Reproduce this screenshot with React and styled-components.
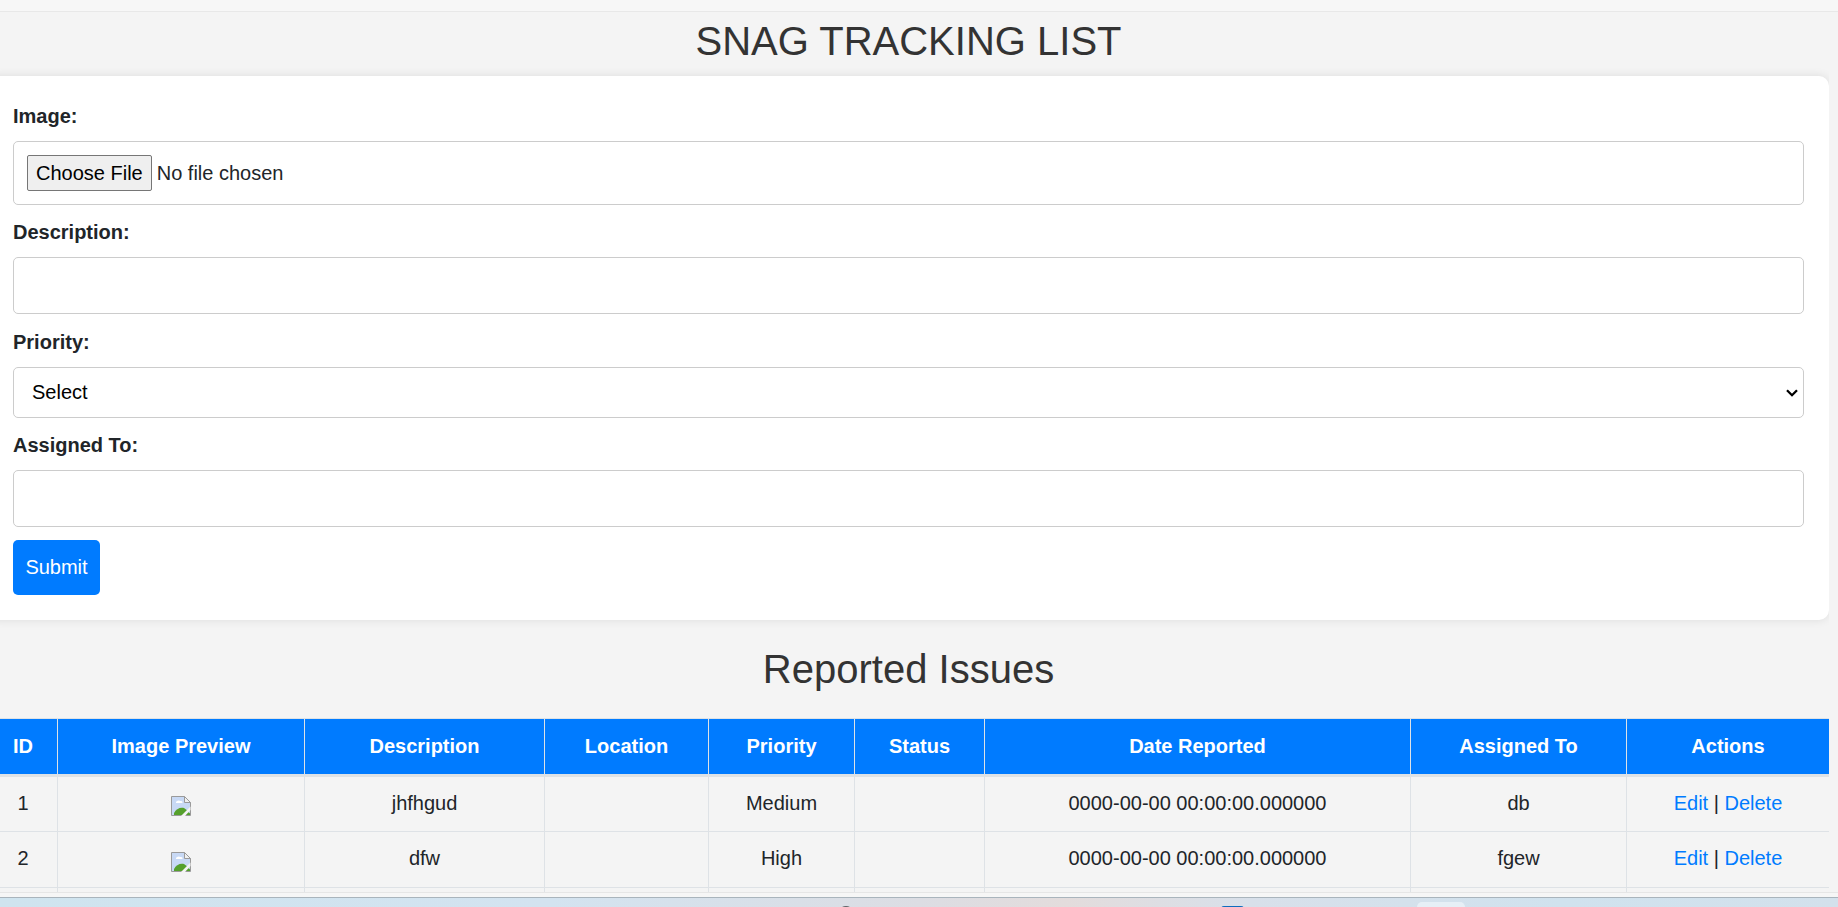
import React from "react";
import styled, { createGlobalStyle } from "styled-components";

const Global = createGlobalStyle`
  html, body { margin: 0; padding: 0; height: 907px; overflow: hidden; background: #f4f4f4; }
  body { font-family: "Liberation Sans", Arial, sans-serif; font-size: 20px; color: #212529; }
  * { box-sizing: border-box; }
`;

const Screen = styled.div`
  height: 907px;
  display: flex;
  flex-direction: column;
  overflow: hidden;
`;
const TopStrip = styled.div`
  height: 12px;
  flex: none;
  background: #f7f7f7;
  border-bottom: 1px solid #e8e8e8;
`;
const Main = styled.main`
  height: 880px;
  flex: none;
  overflow: hidden;
  margin-left: -12px;
  width: 1841px;
`;
const Gutter = styled.div`
  height: 5px;
  flex: none;
  background: #f6f6f6;
  border-top: 1px solid #e6e6e6;
`;
const Title = styled.h1`
  margin: 0;
  height: 64px;
  line-height: 58px;
  text-align: center;
  font-size: 40px;
  font-weight: 400;
  color: #333;
`;
const Card = styled.form`
  height: 544px;
  background: #fff;
  border-radius: 10px;
  box-shadow: 0 0 10px rgba(0, 0, 0, 0.1);
  padding: 29px 25px 0;
`;
const Label = styled.label`
  display: block;
  font-weight: 700;
  line-height: 23px;
  margin-bottom: 13px;
`;
const fieldBase = `
  display: block;
  width: 100%;
  border: 1px solid #ccc;
  border-radius: 5px;
  background-color: #fff;
  font-family: "Liberation Sans", Arial, sans-serif;
  font-size: 20px;
`;
const FileInput = styled.input`
  ${fieldBase}
  height: 64px;
  padding: 13px;
  color: #212529;
  margin-bottom: 16px;
  &::file-selector-button {
    height: 36px;
    font-family: "Liberation Sans", Arial, sans-serif;
    font-size: 20px;
    color: #000;
    padding: 1px 8px;
    margin-right: 5px;
    background: #efefef;
    border: 1px solid #767676;
    border-radius: 2px;
  }
`;
const TextInput = styled.input`
  ${fieldBase}
  height: 57px;
  padding: 10px;
  margin-bottom: 17px;
`;
const Select = styled.select`
  ${fieldBase}
  appearance: none;
  height: 51px;
  padding: 0 18px 2px;
  color: #000;
  margin-bottom: 16px;
  background-image: url("data:image/svg+xml,%3Csvg xmlns='http://www.w3.org/2000/svg' width='12' height='8'%3E%3Cpath d='M1 1.2 6 6.2 11 1.2' fill='none' stroke='%23000' stroke-width='2.3'/%3E%3C/svg%3E");
  background-repeat: no-repeat;
  background-position: right 5px center;
`;
const Submit = styled.button`
  display: block;
  margin-top: -4px;
  width: 87px;
  height: 55px;
  background: #007bff;
  color: #fff;
  border: 0;
  border-radius: 5px;
  font-family: "Liberation Sans", Arial, sans-serif;
  font-size: 20px;
`;
const Subtitle = styled.h2`
  margin: 0;
  height: 99px;
  padding-top: 26px;
  line-height: 46px;
  text-align: center;
  font-size: 40px;
  font-weight: 400;
  color: #333;
`;
const Table = styled.table`
  width: 1841px;
  table-layout: fixed;
  border-collapse: collapse;
  font-size: 20px;
  margin-top: -1px;
`;
const HeadCell = styled.th`
  height: 57px;
  padding: 0;
  background: #007bff;
  color: #fff;
  font-weight: 700;
  text-align: center;
  border: 1px solid #dee2e6;
  border-bottom-width: 3px;
  width: ${(p) => p.$w}px;
`;
const Cell = styled.td`
  height: 56px;
  padding: 0 0 2px;
  text-align: center;
  border: 1px solid #dee2e6;
`;
const ActionLink = styled.a`
  color: #007bff;
  text-decoration: none;
`;
const Desktop = styled.div`
  height: 10px;
  flex: none;
  overflow: hidden;
  display: flex;
  align-items: flex-start;
  padding-left: 838px;
  border-top: 1px solid #a9b4bc;
  background: linear-gradient(90deg, #cfe4ef 0%, #d3e3f0 30%, #dcdde3 50%, #e3dcdc 58%, #d8e0ea 68%, #d0e2ee 85%, #d3e1ec 100%);
`;
const TrayMark = styled.span`
  width: 16px;
  height: 10px;
  margin-top: 8px;
  border-radius: 8px 8px 0 0;
  background: #5e6266;
`;
const TrayBlue = styled.span`
  width: 23px;
  height: 4px;
  margin-left: 367px;
  margin-top: 8px;
  border-radius: 3px 3px 0 0;
  background: #0f6cbd;
`;
const TrayTab = styled.span`
  width: 48px;
  height: 8px;
  margin-left: 173px;
  margin-top: 4px;
  border-radius: 5px 5px 0 0;
  background: #e6eff6;
`;
const BrokenIcon = styled.svg`
  display: block;
  margin: 6px auto 0;
`;

const BrokenImage = () => (
  <BrokenIcon width="20" height="20" viewBox="0 0 20 20">
    <path d="M.5.5H13.5L19.5 6.5V19.5H.5Z" fill="#c8d9f5" stroke="#9a9a9a" />
    <path d="M13.5.5V6.5H19.5Z" fill="#f0f0f0" stroke="#9a9a9a" />
    <path d="M5 6.5c0-1.6 3-2.6 4.5-1.4 1.8-.2 2.6 1 1.8 1.9H5.6C5 7 5 6.9 5 6.5Z" fill="#fff" />
    <path d="M3 19V17C5 13 9 11 13 12L17 15 19 19Z" fill="#55a02c" />
    <path d="M10 20 19.5 10.5V14L14 20Z" fill="#f4f4f4" />
    <path d="M16.5 19H19V16.5Z" fill="#55a02c" />
  </BrokenIcon>
);

const columns = [
  ["ID", 69], ["Image Preview", 247], ["Description", 240], ["Location", 164],
  ["Priority", 146], ["Status", 130], ["Date Reported", 426], ["Assigned To", 216], ["Actions", 203],
];
const rows = [
  { id: 1, description: "jhfhgud", priority: "Medium", assigned: "db" },
  { id: 2, description: "dfw", priority: "High", assigned: "fgew" },
];

export default function App() {
  return (
    <Screen>
      <Global />
      <TopStrip />
      <Main>
        <Title>SNAG TRACKING LIST</Title>
        <Card onSubmit={(e) => e.preventDefault()}>
          <Label>Image:</Label>
          <FileInput type="file" />
          <Label>Description:</Label>
          <TextInput type="text" />
          <Label>Priority:</Label>
          <Select defaultValue="">
            <option value="">Select</option>
            <option>Low</option>
            <option>Medium</option>
            <option>High</option>
          </Select>
          <Label>Assigned To:</Label>
          <TextInput type="text" />
          <Submit type="submit">Submit</Submit>
        </Card>
        <Subtitle>Reported Issues</Subtitle>
        <Table>
          <thead>
            <tr>
              {columns.map(([name, w]) => (
                <HeadCell key={name} $w={w}>{name}</HeadCell>
              ))}
            </tr>
          </thead>
          <tbody>
            {rows.map((r) => (
              <tr key={r.id}>
                <Cell>{r.id}</Cell>
                <Cell><BrokenImage /></Cell>
                <Cell>{r.description}</Cell>
                <Cell />
                <Cell>{r.priority}</Cell>
                <Cell />
                <Cell>0000-00-00 00:00:00.000000</Cell>
                <Cell>{r.assigned}</Cell>
                <Cell>
                  <ActionLink href="#">Edit</ActionLink> | <ActionLink href="#">Delete</ActionLink>
                </Cell>
              </tr>
            ))}
            <tr>
              {columns.map(([name]) => <Cell key={name} />)}
            </tr>
          </tbody>
        </Table>
      </Main>
      <Gutter />
      <Desktop>
        <TrayMark />
        <TrayBlue />
        <TrayTab />
      </Desktop>
    </Screen>
  );
}
